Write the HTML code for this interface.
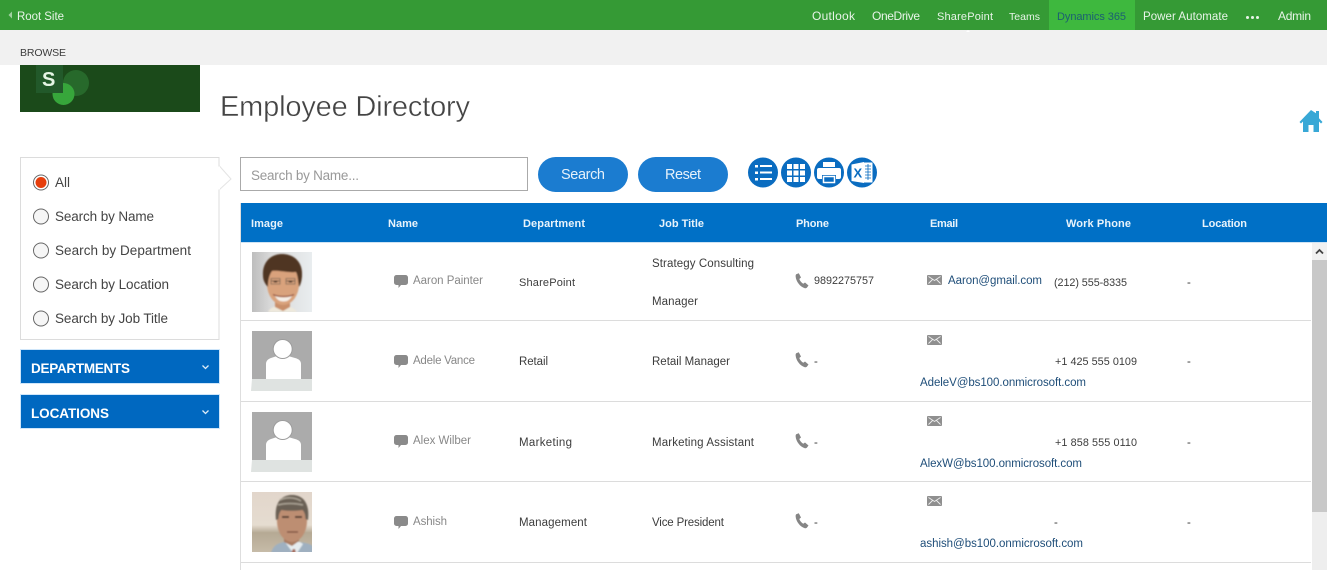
<!DOCTYPE html>
<html lang="en">
<head>
<meta charset="utf-8">
<title>Employee Directory</title>
<style>
html,body{margin:0;padding:0;background:#fff;width:1327px;height:570px;overflow:hidden}
svg{display:block}
text{font-family:"Liberation Sans",Arial,sans-serif;font-size:11.5px;fill:#3c3c3c}
.nav{fill:#e8f4e8}
.side{font-size:13.5px;fill:#444}
.acc{font-size:13.5px;font-weight:700;fill:#fff}
.th{font-weight:700;font-size:11px;fill:#e8f3fb}
.nm{fill:#888}
.ml{fill:#1f4e79}
.num{font-size:10.8px}
.btn{font-size:14.5px;fill:#e6f1fa}
</style>
</head>
<body>
<svg width="1327" height="570" viewBox="0 0 1327 570" xmlns="http://www.w3.org/2000/svg">
<defs>
  <g id="chat"><path d="M2.500 0h9A2.500 2.500 0 0 1 14 2.500v5A2.500 2.500 0 0 1 11.500 10H7l-2.500 3V10h-2A2.500 2.500 0 0 1 0 7.500v-5A2.500 2.500 0 0 1 2.500 0z" fill="#8a8a8a"/></g>
  <g id="phone"><path d="M1.200 1.300 3.800 .2 6 4.500 4.300 6c.8 2 2.200 3.700 4 4.800l1.700-1.300 3.500 3-1.500 2c-.5.600-1.300.9-2.100.7C5 13.700 1 8.500.6 3.200c0-.7.200-1.400.6-1.900z" fill="#858585"/></g>
  <g id="mail"><rect width="15" height="10" rx="1" fill="#8f8f8f"/><path d="M1.500 1.500 7.500 5.500 13.500 1.500M1.500 8.500 5.500 4.500M13.500 8.500 9.500 4.500" stroke="#eee" stroke-width=".9" fill="none"/></g>
  <g id="sil">
    <rect x="252" y="0" width="60" height="48" fill="#ababab"/>
    <path d="M252 48h60v12H251z" fill="#dfe3e1"/>
    <path d="M266 48V33c0-3 2-5 5-6l6-2h11l7 2c4 1 6 3 6 6v15z" fill="#fff"/>
    <circle cx="282.700" cy="18" r="10" fill="#9c9c9c"/>
    <circle cx="282.700" cy="18" r="9" fill="#fff"/>
  </g>
  <filter id="b1" x="-10%" y="-10%" width="120%" height="120%"><feGaussianBlur stdDeviation=".8"/></filter>
  <clipPath id="c1"><rect x="252" y="252" width="60" height="60"/></clipPath>
  <clipPath id="c2"><rect x="252" y="492" width="60" height="60"/></clipPath>
  <linearGradient id="g1" x1="0" x2="1" y1="0" y2="0"><stop offset="0" stop-color="#bdbdbd"/><stop offset=".3" stop-color="#d8d8d8"/><stop offset="1" stop-color="#e9edef"/></linearGradient>
  <linearGradient id="g2" x1="0" x2="0" y1="0" y2="1"><stop offset="0" stop-color="#e2d6cb"/><stop offset=".55" stop-color="#e5dcd0"/><stop offset=".68" stop-color="#b5a994"/><stop offset="1" stop-color="#c6bba8"/></linearGradient>
</defs>

<!-- suite bar -->
<rect width="1327" height="30" fill="#359a35"/>
<path d="M12 11.500v7l-3.500-3.500z" fill="#a0d0a0"/>
<text class="nav" x="17" y="20" textLength="47">Root Site</text>
<text class="nav" x="812" y="20" textLength="43" style="font-size:12px">Outlook</text>
<text class="nav" x="872" y="20" textLength="48" style="font-size:12px">OneDrive</text>
<text class="nav" x="937" y="20" textLength="56" style="font-size:11px">SharePoint</text>
<text class="nav" x="1009" y="20" textLength="31" style="font-size:10.500px">Teams</text>
<rect x="1049" width="86" height="30" fill="#3eb83e"/>
<text x="1057" y="20" textLength="69" style="fill:#1c5f72;font-size:11px">Dynamics 365</text>
<text class="nav" x="1143" y="20" textLength="85">Power Automate</text>
<g fill="#e8f4e8"><circle cx="1247.500" cy="17.500" r="1.500"/><circle cx="1252.500" cy="17.500" r="1.500"/><circle cx="1257.500" cy="17.500" r="1.500"/></g>
<text class="nav" x="1278" y="20" textLength="33" style="font-size:12px">Admin</text>

<!-- ribbon -->
<rect y="30" width="1327" height="35" fill="#f1f1f1"/>
<path d="M966 32l2-2 2 2z" fill="#fff"/>
<text x="20" y="56" textLength="46" style="font-size:10.500px">BROWSE</text>

<!-- logo -->
<rect x="20" y="65" width="180" height="47" fill="#1b4a1a"/>
<circle cx="76" cy="83" r="13" fill="#27692b"/>
<circle cx="63.500" cy="94" r="11" fill="#37a63b"/>
<rect x="36" y="65" width="27" height="28" fill="#22592a"/>
<text x="42" y="86" style="font-size:20px;font-weight:700;fill:#e5f5e5">S</text>

<!-- title -->
<text x="220" y="116" textLength="250" style="font-size:29px;fill:#444;stroke:#fff;stroke-width:.4px">Employee Directory</text>

<!-- home -->
<path d="M1311 110 1299.500 122l1.500 1.500 2-2V132h5.500v-7h5v7h5.500v-10.500l2 2 1.500-1.500-3.500-3.700V111h-3v2.300z" fill="#38a8d6"/>

<!-- filter panel -->
<rect x="20.500" y="157.500" width="198.500" height="182" fill="#fff" stroke="#dcdcdc"/>
<path d="M219 165.500 231 179 219 190" fill="#fff" stroke="#e4e4e4"/>
<rect x="218" y="166.500" width="2" height="23" fill="#fff"/>
<g fill="#f6f6f6" stroke="#666" stroke-width="1">
  <circle cx="41" cy="182.500" r="7.500" fill="#fff"/>
  <circle cx="41" cy="216.500" r="7.500"/>
  <circle cx="41" cy="250.500" r="7.500"/>
  <circle cx="41" cy="284.500" r="7.500"/>
  <circle cx="41" cy="318.500" r="7.500"/>
</g>
<circle cx="41" cy="182.500" r="5.500" fill="#e63e0c"/>
<text class="side" x="55" y="187" textLength="15">All</text>
<text class="side" x="55" y="221" textLength="99">Search by Name</text>
<text class="side" x="55" y="255" textLength="136">Search by Department</text>
<text class="side" x="55" y="289" textLength="114">Search by Location</text>
<text class="side" x="55" y="323" textLength="113">Search by Job Title</text>

<!-- accordions -->
<rect x="20.500" y="349.500" width="199" height="34" fill="#0068c0" stroke="#cfe6fa"/>
<text class="acc" x="31" y="373" textLength="99">DEPARTMENTS</text>
<path d="M202.500 365.500 205.500 368.500 208.500 365.500" fill="none" stroke="#dcecf8" stroke-width="1.300"/>
<rect x="20.500" y="394.500" width="199" height="34" fill="#0068c0" stroke="#cfe6fa"/>
<text class="acc" x="31" y="418" textLength="78">LOCATIONS</text>
<path d="M202.500 410.500 205.500 413.500 208.500 410.500" fill="none" stroke="#dcecf8" stroke-width="1.300"/>

<!-- search -->
<rect x="240.500" y="157.500" width="287" height="33" fill="#fff" stroke="#aaa"/>
<text x="251" y="180" textLength="108" style="font-size:13.500px;fill:#999">Search by Name...</text>
<rect x="538" y="157" width="90" height="35" rx="17.500" fill="#1b7cd0"/>
<text class="btn" x="561" y="179" textLength="44">Search</text>
<rect x="638" y="157" width="90" height="35" rx="17.500" fill="#1b7cd0"/>
<text class="btn" x="665" y="179" textLength="36">Reset</text>

<!-- view icons -->
<g fill="#0a6cc0">
  <circle cx="763" cy="172.500" r="15"/><circle cx="796" cy="172.500" r="15"/><circle cx="829" cy="172.500" r="15"/><circle cx="862" cy="172.500" r="15"/>
</g>
<g fill="#fff">
  <rect x="755" y="165" width="3" height="2.500"/><rect x="760" y="165" width="12" height="2"/>
  <rect x="755" y="171.500" width="3" height="2.500"/><rect x="760" y="171.500" width="12" height="2"/>
  <rect x="755" y="178" width="3" height="2.500"/><rect x="760" y="178" width="12" height="2"/>
  <rect x="787" y="164" width="5" height="5"/><rect x="793.500" y="164" width="5" height="5"/><rect x="800" y="164" width="5" height="5"/>
  <rect x="787" y="170.500" width="5" height="5"/><rect x="793.500" y="170.500" width="5" height="5"/><rect x="800" y="170.500" width="5" height="5"/>
  <rect x="787" y="177" width="5" height="5"/><rect x="793.500" y="177" width="5" height="5"/><rect x="800" y="177" width="5" height="5"/>
  <path d="M823 162h12v5h-12z"/>
  <path d="M819 168h20a2 2 0 0 1 2 2v7a2 2 0 0 1-2 2h-3v-4h-14v4h-3a2 2 0 0 1-2-2v-7a2 2 0 0 1 2-2z"/>
  <path d="M823.500 176.500h11v6h-11z" fill="#0a6cc0" stroke="#fff" stroke-width="1.500"/>
  <path d="M862 162.500h10.500v20H862z"/>
  <path d="M851.500 164.500 864 162v21l-12.500-2z"/>
</g>
<text x="853.500" y="177.500" style="font-size:13px;font-weight:700;fill:#0a6cc0">X</text>
<g stroke="#0a6cc0" stroke-width=".8"><path d="M865 166h6M865 169h6M865 172h6M865 175h6M865 178h6M868 164v16"/></g>

<!-- table header -->
<rect x="241" y="203" width="1086" height="39" fill="#0070c6"/>
<rect x="241" y="242" width="1086" height="1" fill="#cfe3f3"/>
<text class="th" x="251" y="227" textLength="32">Image</text>
<text class="th" x="388" y="227" textLength="30">Name</text>
<text class="th" x="523" y="227" textLength="62">Department</text>
<text class="th" x="659" y="227" textLength="45">Job Title</text>
<text class="th" x="796" y="227" textLength="33">Phone</text>
<text class="th" x="930" y="227" textLength="28">Email</text>
<text class="th" x="1066" y="227" textLength="65">Work Phone</text>
<text class="th" x="1202" y="227" textLength="45">Location</text>

<!-- table frame -->
<rect x="240" y="203" width="1" height="367" fill="#dedede"/>
<g fill="#dcdcdc">
  <rect x="241" y="320" width="1070" height="1"/>
  <rect x="241" y="401" width="1070" height="1"/>
  <rect x="241" y="481" width="1070" height="1"/>
  <rect x="241" y="562" width="1070" height="1"/>
</g>

<!-- scrollbar -->
<rect x="1312" y="243" width="15" height="327" fill="#eee"/>
<rect x="1312" y="243" width="15" height="17" fill="#f1f1f1"/>
<rect x="1312" y="260" width="15" height="252" fill="#c8c8c8"/>
<path d="M1316 253.500 1319.500 250 1323 253.500" fill="none" stroke="#444" stroke-width="1.800"/>

<!-- row 1 -->
<g clip-path="url(#c1)">
  <rect x="252" y="252" width="60" height="60" fill="url(#g1)"/>
  <g filter="url(#b1)">
    <path d="M268 312c2-5 8-6 14-6s12 1 15 6z" fill="#eee9dc"/>
    <path d="M275 298h15v9l-7 4-8-4z" fill="#c98f6a"/>
    <ellipse cx="283" cy="284" rx="16" ry="21" fill="#d9a27b"/>
    <path d="M263 276c-1-14 8-22 19-22 12 0 21 8 20 22-.3 4-1 8-3 11-1-6-1-11-3-15-7 1-18-2-24-1-3 4-4 10-4 16-3-3-5-7-5-11z" fill="#503420"/>
    <path d="M271 281h9M286 281h9" stroke="#6e5a4c" stroke-width="1"/>
    <path d="M271 278.500h9v5.500h-9zM286 278.500h9v5.500h-9z" fill="none" stroke="#7a6656" stroke-width=".8"/>
    <ellipse cx="275.500" cy="281.500" rx="2" ry="1" fill="#3c2c24"/>
    <ellipse cx="290.500" cy="281.500" rx="2" ry="1" fill="#3c2c24"/>
    <path d="M275 296c5 2 12 2 17 0-2 4-5 5.500-8.500 5.500s-6.500-1.500-8.500-5.500z" fill="#f5efe8"/>
    <path d="M273 294.500c5 2.500 16 2.500 21 0" stroke="#8c4a3a" fill="none"/>
  </g>
</g>
<use href="#chat" x="394" y="275"/>
<text class="nm" x="413" y="284" textLength="70">Aaron Painter</text>
<text x="519" y="286" textLength="56" style="font-size:11px">SharePoint</text>
<text x="652" y="267" textLength="102">Strategy Consulting</text>
<text x="652" y="305" textLength="46">Manager</text>
<use href="#phone" x="795" y="273"/>
<text class="num" x="814" y="284" textLength="60">9892275757</text>
<use href="#mail" x="927" y="275"/>
<text class="ml" x="948" y="284" textLength="94">Aaron@gmail.com</text>
<text class="num" x="1054" y="286" textLength="73">(212) 555-8335</text>
<text x="1187" y="286">-</text>

<!-- row 2 -->
<use href="#sil" y="331"/>
<use href="#chat" x="394" y="355"/>
<text class="nm" x="413" y="364" textLength="62">Adele Vance</text>
<text x="519" y="365" textLength="29">Retail</text>
<text x="652" y="365" textLength="78">Retail Manager</text>
<use href="#phone" x="795" y="352"/>
<text x="814" y="365">-</text>
<use href="#mail" x="927" y="335"/>
<text class="ml" x="920" y="386" textLength="166">AdeleV@bs100.onmicrosoft.com</text>
<text class="num" x="1055" y="365" textLength="82">+1 425 555 0109</text>
<text x="1187" y="365">-</text>

<!-- row 3 -->
<use href="#sil" y="412"/>
<use href="#chat" x="394" y="435"/>
<text class="nm" x="413" y="444" textLength="58">Alex Wilber</text>
<text x="519" y="446" textLength="53">Marketing</text>
<text x="652" y="446" textLength="102">Marketing Assistant</text>
<use href="#phone" x="795" y="433"/>
<text x="814" y="446">-</text>
<use href="#mail" x="927" y="416"/>
<text class="ml" x="920" y="467" textLength="162">AlexW@bs100.onmicrosoft.com</text>
<text class="num" x="1055" y="446" textLength="82">+1 858 555 0110</text>
<text x="1187" y="446">-</text>

<!-- row 4 -->
<g clip-path="url(#c2)">
  <rect x="252" y="492" width="60" height="60" fill="url(#g2)"/>
  <g filter="url(#b1)">
    <path d="M271 553c2-8 8-10 13-11h16c6 1 12 2 13 5v6z" fill="#9fb0c0"/>
    <path d="M293 553l-8-11h15l3 2-6 9z" fill="#e6ecef"/>
    <path d="M291 553l2-4 2 0 1 4z" fill="#a56a5a"/>
    <path d="M284 533h15v8l-7 5-8-4z" fill="#a97c62"/>
    <ellipse cx="292" cy="521" rx="15" ry="21" fill="#bd8e72"/>
    <path d="M282 517h7M295 517h7" stroke="#4c362c" stroke-width="1.800"/>
    <path d="M287 532h11" stroke="#7a4c3e" stroke-width="1.300"/>
    <path d="M276 520c-2-17 5-25 16-25s18 8 16 25l-2.500-1c0-4-1-7-3-9-7 1-15 1-21 0-2 2-3 5-3 9z" fill="#6a6155"/>
    <path d="M280 500c6-3 15-3 21 1M278 505c7-2 17-2 25 0" stroke="#aaa294" stroke-width="1.600" fill="none"/>
  </g>
</g>
<use href="#chat" x="394" y="516"/>
<text class="nm" x="413" y="525" textLength="34">Ashish</text>
<text x="519" y="526" textLength="68">Management</text>
<text x="652" y="526" textLength="72">Vice President</text>
<use href="#phone" x="795" y="513"/>
<text x="814" y="526">-</text>
<use href="#mail" x="927" y="496"/>
<text class="ml" x="920" y="547" textLength="163">ashish@bs100.onmicrosoft.com</text>
<text x="1054" y="526">-</text>
<text x="1187" y="526">-</text>
</svg>
</body>
</html>
